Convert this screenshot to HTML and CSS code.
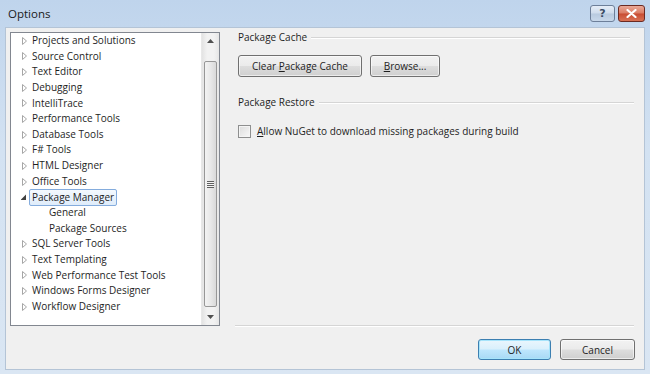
FILE: index.html
```html
<!DOCTYPE html>
<html lang="en">
<head>
    <meta charset="UTF-8">
    <title>Options</title>
    <link rel="stylesheet" href="styles.css">
</head>
<body>
    <div class="window">
        <div class="titlebar">
            <span class="title">Options</span>
            <div class="caption-buttons">
                <button class="cap-btn help">?</button>
                <button class="cap-btn close">
                    <svg width="11" height="9" viewBox="0 0 11 9"><path d="M1.5 1 L9.5 8 M9.5 1 L1.5 8" stroke="#fff" stroke-width="2.2" stroke-linecap="round"/></svg>
                </button>
            </div>
        </div>
        <div class="client">
            <div class="main">
                <div class="tree">
                    <ul class="tree-list">
                        <li class="node"><span class="arrow"></span>Projects and Solutions</li>
                        <li class="node"><span class="arrow"></span>Source Control</li>
                        <li class="node"><span class="arrow"></span>Text Editor</li>
                        <li class="node"><span class="arrow"></span>Debugging</li>
                        <li class="node"><span class="arrow"></span>IntelliTrace</li>
                        <li class="node"><span class="arrow"></span>Performance Tools</li>
                        <li class="node"><span class="arrow"></span>Database Tools</li>
                        <li class="node"><span class="arrow"></span>F# Tools</li>
                        <li class="node"><span class="arrow"></span>HTML Designer</li>
                        <li class="node"><span class="arrow"></span>Office Tools</li>
                        <li class="node"><span class="arrow open"></span><span class="selected">Package Manager</span></li>
                        <li class="node child">General</li>
                        <li class="node child">Package Sources</li>
                        <li class="node"><span class="arrow"></span>SQL Server Tools</li>
                        <li class="node"><span class="arrow"></span>Text Templating</li>
                        <li class="node"><span class="arrow"></span>Web Performance Test Tools</li>
                        <li class="node"><span class="arrow"></span>Windows Forms Designer</li>
                        <li class="node"><span class="arrow"></span>Workflow Designer</li>
                    </ul>
                    <div class="scrollbar">
                        <div class="sb-arrow up"></div>
                        <div class="sb-thumb"><span class="grip"></span></div>
                        <div class="sb-arrow down"></div>
                    </div>
                </div>
                <div class="settings">
                    <div class="group-title"><span>Package Cache</span></div>
                    <div class="button-row">
                        <button class="button clear-btn">Clear <u>P</u>ackage Cache</button>
                        <button class="button browse-btn"><u>B</u>rowse...</button>
                    </div>
                    <div class="group-title restore"><span>Package Restore</span></div>
                    <label class="check-row">
                        <span class="checkbox"></span>
                        <span><u>A</u>llow NuGet to download missing packages during build</span>
                    </label>
                </div>
            </div>
            <div class="footer">
                <button class="button ok-btn">OK</button>
                <button class="button cancel-btn">Cancel</button>
            </div>
        </div>
    </div>
</body>
</html>
```
FILE: styles.css
```css
body {
    margin: 0;
    font-family: 'Open Sans', 'Noto Sans', sans-serif;
    font-size: 10px;
    color: #1e1e1e;
}

.window {
    width: 650px;
    height: 374px;
    background: linear-gradient(to bottom, #bfd4ec 0%, #d3e2f2 40%, #dae6f3 100%);
    display: flex;
    flex-direction: column;
    box-sizing: border-box;
}

.titlebar {
    height: 27px;
    display: flex;
    align-items: flex-start;
    justify-content: space-between;
    padding: 0 5px 0 8px;
}

.title {
    margin-top: 6px;
    font-size: 11.5px;
    color: #1a1a1a;
}

.caption-buttons {
    display: flex;
    gap: 3px;
    margin-top: 5px;
}

.cap-btn {
    height: 17px;
    border: 1px solid #6d7f99;
    border-radius: 3px;
    padding: 0;
    display: flex;
    align-items: center;
    justify-content: center;
}

.help {
    width: 25px;
    background: linear-gradient(to bottom, #e5edf7 0%, #cfdcec 48%, #b8cadf 52%, #c8d8ea 100%);
    color: #3b4d66;
    font-weight: bold;
    font-size: 11px;
    font-family: 'DejaVu Sans', sans-serif;
}

.close {
    width: 27px;
    border-color: #6b2a22;
    background: linear-gradient(to bottom, #eaa998 0%, #da7b63 48%, #c84c32 52%, #d87255 100%);
}

.client {
    flex: 1;
    margin: 0 5px 4px 5px;
    background-color: #f0f0f0;
    border: 1px solid #b4c4d6;
    display: flex;
    flex-direction: column;
}

.main {
    display: flex;
    padding: 4px 0 0 4px;
}

.tree {
    width: 210px;
    height: 294px;
    box-sizing: border-box;
    border: 1px solid #828790;
    background-color: #fff;
    display: flex;
}

.tree-list {
    list-style: none;
    margin: 0;
    padding: 0;
    flex: 1;
}

.node {
    height: 15.65px;
    line-height: 15.65px;
    display: flex;
    align-items: center;
    padding-left: 10px;
    white-space: nowrap;
}

.node.child {
    padding-left: 38px;
}

.arrow {
    width: 11px;
    height: 8px;
    display: inline-block;
    flex-shrink: 0;
    background: no-repeat 1px 0 / 6px 8px url("data:image/svg+xml,%3Csvg xmlns='http://www.w3.org/2000/svg' width='6' height='8'%3E%3Cpath d='M0.5 0.5 L4.5 4 L0.5 7.5 Z' fill='none' stroke='%23a6a6a6'/%3E%3C/svg%3E");
}

.arrow.open {
    background: no-repeat -1px 1px / 7px 7px url("data:image/svg+xml,%3Csvg xmlns='http://www.w3.org/2000/svg' width='7' height='7'%3E%3Cpath d='M6 0.5 L6 6 L0.5 6 Z' fill='%23404040'/%3E%3C/svg%3E");
}

.selected {
    margin-left: -3px;
    padding: 0 2px;
    height: 15px;
    line-height: 15px;
    border: 1px solid #84acdd;
    border-radius: 2px;
    background: linear-gradient(to bottom, #f4f9fe, #dfecfa);
}

.scrollbar {
    width: 17px;
    background: linear-gradient(to right, #e3e3e3, #f2f2f2 30%, #f2f2f2 70%, #e6e6e6);
    display: flex;
    flex-direction: column;
    align-items: center;
    border-left: 1px solid #e8e8e8;
}

.sb-arrow {
    height: 16px;
    width: 100%;
    background-repeat: no-repeat;
    background-position: center;
}

.sb-arrow.up {
    background-image: url("data:image/svg+xml,%3Csvg xmlns='http://www.w3.org/2000/svg' width='7' height='4'%3E%3Cpath d='M0 4 L3.5 0 L7 4 Z' fill='%23505050'/%3E%3C/svg%3E");
    margin-bottom: 12px;
}

.sb-arrow.down {
    background-image: url("data:image/svg+xml,%3Csvg xmlns='http://www.w3.org/2000/svg' width='7' height='4'%3E%3Cpath d='M0 0 L3.5 4 L7 0 Z' fill='%23505050'/%3E%3C/svg%3E");
    margin-top: 2px;
}

.sb-thumb {
    flex: 1;
    width: 13px;
    box-sizing: border-box;
    border: 1px solid #979797;
    border-radius: 2px;
    background: linear-gradient(to right, #f3f3f3, #e8e8e8 50%, #d9d9d9);
    display: flex;
    align-items: center;
    justify-content: center;
}

.grip {
    width: 7px;
    height: 7px;
    background: repeating-linear-gradient(to bottom, #5f5f5f 0, #5f5f5f 1px, #f4f4f4 1px, #f4f4f4 2px);
}

.settings {
    flex: 1;
    margin: -1px 10px 0 15px;
    height: 294px;
    border-bottom: 1px solid #d5d5d5;
    box-shadow: 0 1px 0 #fff;
    padding-left: 3px;
}

.group-title {
    display: flex;
    align-items: center;
    height: 12px;
    margin-right: 4px;
}

.group-title::after {
    content: "";
    flex: 1;
    height: 0;
    border-top: 1px solid #d5d5d5;
    border-bottom: 1px solid #fff;
    margin-left: 4px;
    margin-top: 1px;
}

.group-title.restore {
    margin-top: 19px;
    margin-right: 0;
}

.button-row {
    display: flex;
    gap: 8px;
    margin-top: 12px;
}

.button {
    height: 22px;
    border: 1px solid #707070;
    border-radius: 3px;
    background: linear-gradient(to bottom, #f2f2f2 0%, #ebebeb 48%, #dddddd 52%, #cfcfcf 100%);
    box-shadow: inset 0 0 0 1px rgba(255, 255, 255, 0.6);
    font-family: 'Open Sans', 'Noto Sans', sans-serif;
    font-size: 10px;
    color: #1e1e1e;
    padding: 0;
}

.clear-btn {
    width: 124px;
}

.browse-btn {
    width: 70px;
}

.check-row {
    display: flex;
    align-items: center;
    gap: 6px;
    margin-top: 16px;
}

.checkbox {
    width: 11px;
    height: 11px;
    border: 1px solid #8e8f8f;
    background: linear-gradient(135deg, #dcdcdc, #f8f8f8);
    box-shadow: inset 0 0 0 1px #f4f4f4;
}

.footer {
    display: flex;
    justify-content: flex-end;
    gap: 9px;
    padding: 13px 9px 0 0;
}

.ok-btn {
    width: 73px;
    height: 21px;
    border-color: #3c7fb1;
    background: linear-gradient(to bottom, #eaf6fd 0%, #d9f0fc 48%, #bee6fd 52%, #a7d9f5 100%);
    box-shadow: inset 0 0 0 1px #a6e4fb;
}

.cancel-btn {
    width: 75px;
    height: 21px;
}
```
